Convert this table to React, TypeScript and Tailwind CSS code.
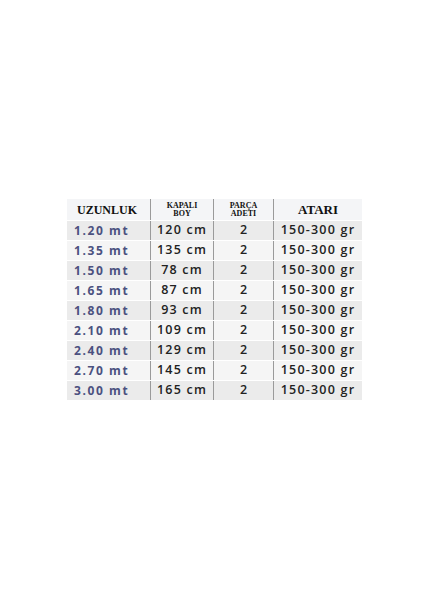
const rows = [
  ['1.20 mt', '120 cm'],
  ['1.35 mt', '135 cm'],
  ['1.50 mt', '78 cm'],
  ['1.65 mt', '87 cm'],
  ['1.80 mt', '93 cm'],
  ['2.10 mt', '109 cm'],
  ['2.40 mt', '129 cm'],
  ['2.70 mt', '145 cm'],
  ['3.00 mt', '165 cm'],
]

const serif = { fontFamily: '"Liberation Serif", "Times New Roman", serif' }

export default function App() {
  return (
    <div className="w-[424px] h-[600px] bg-white pt-[199px] pl-[67px]">
      <div
        className="w-[295px] flex flex-col"
        style={{ fontFamily: '"Open Sans", "Liberation Sans", sans-serif' }}
      >
        {/* header */}
        <div className="h-[21px] flex bg-[#f4f5f7] text-[#111]" style={serif}>
          <div className="w-[83px] flex items-center pl-[10px] text-[12px] font-bold">UZUNLUK</div>
          <div className="w-[63px] flex flex-col items-center justify-center border-l border-[#9a9a9a] text-[8px] font-bold leading-[8px]">
            <span>KAPALI</span>
            <span>BOY</span>
          </div>
          <div className="w-[60px] flex flex-col items-center justify-center border-l border-[#9a9a9a] text-[8px] font-bold leading-[8px]">
            <span>PARÇA</span>
            <span>ADETI</span>
          </div>
          <div className="flex-1 flex items-center justify-center border-l border-[#9a9a9a] text-[13px] font-bold">ATARI</div>
        </div>
        {rows.map(([len, boy], i) => (
          <div
            key={len}
            className={`h-[20px] flex border-t border-white ${i % 2 === 0 ? 'bg-[#ebebeb]' : 'bg-[#f5f5f5]'}`}
          >
            <div className="w-[83px] flex items-center pl-[7px] text-[12px] font-bold tracking-[1.6px] text-[#4b5180]">{len}</div>
            <div className="w-[63px] flex items-center justify-center border-l border-[#9a9a9a] text-[12.5px] font-semibold tracking-[1.2px] text-[#222]">{boy}</div>
            <div className="w-[60px] flex items-center justify-center border-l border-[#9a9a9a] text-[12.5px] font-semibold text-[#222]">2</div>
            <div className="flex-1 flex items-center justify-center border-l border-[#9a9a9a] text-[12.5px] font-semibold tracking-[1.2px] text-[#222]">150-300 gr</div>
          </div>
        ))}
      </div>
    </div>
  )
}
